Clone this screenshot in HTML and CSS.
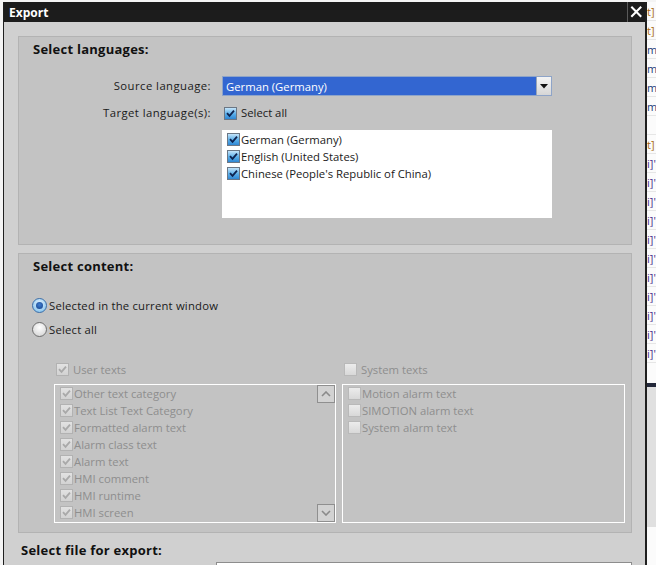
FILE: index.html
```html
<!DOCTYPE html>
<html>
<head>
<meta charset="utf-8">
<link rel="stylesheet" href="styles.css">
</head>
<body>
<div class="page">
  <div class="dialog">
    <div class="titlebar">
      <span class="title">Export</span>
      <span class="close"><svg width="18" height="20" viewBox="0 0 18 20"><path d="M3.5 4.5 L14 15 M14 4.5 L3.5 15" stroke="#fff" stroke-width="2.2" fill="none"/></svg></span>
    </div>
    <div class="content">
      <section class="group g1">
        <h2 class="gtitle">Select languages:</h2>
        <div class="form">
          <label class="lbl">Source language:</label>
          <div class="dropdown">
            <span class="dd-text">German (Germany)</span>
            <span class="dd-btn"><svg width="8" height="5" viewBox="0 0 8 5"><path d="M0 0 H8 L4 4.5 Z" fill="#111"/></svg></span>
          </div>
          <label class="lbl lbl2">Target language(s):</label>
          <div class="chkrow">
            <span class="cb on"><svg width="11" height="11" viewBox="0 0 11 11"><path d="M2 5.2 L4.5 7.8 L9 2.6" stroke="#0d2350" stroke-width="1.8" fill="none"/></svg></span>
            <span>Select all</span>
          </div>
          <span></span>
          <div class="langlist">
            <div class="item"><span class="cb on"><svg width="11" height="11" viewBox="0 0 11 11"><path d="M2 5.2 L4.5 7.8 L9 2.6" stroke="#0d2350" stroke-width="1.8" fill="none"/></svg></span><span>German (Germany)</span></div>
            <div class="item"><span class="cb on"><svg width="11" height="11" viewBox="0 0 11 11"><path d="M2 5.2 L4.5 7.8 L9 2.6" stroke="#0d2350" stroke-width="1.8" fill="none"/></svg></span><span>English (United States)</span></div>
            <div class="item"><span class="cb on"><svg width="11" height="11" viewBox="0 0 11 11"><path d="M2 5.2 L4.5 7.8 L9 2.6" stroke="#0d2350" stroke-width="1.8" fill="none"/></svg></span><span>Chinese (People's Republic of China)</span></div>
          </div>
        </div>
      </section>
      <section class="group g2">
        <h2 class="gtitle">Select content:</h2>
        <div class="radios">
          <div class="radio-row"><span class="radio sel"><span class="dot"></span></span><span>Selected in the current window</span></div>
          <div class="radio-row"><span class="radio"></span><span>Select all</span></div>
        </div>
        <div class="cols">
          <div class="col">
            <div class="colhead dis"><span class="cb dchk"><svg width="11" height="11" viewBox="0 0 11 11"><path d="M2 5.2 L4.5 7.8 L9 2.6" stroke="#a9a9a9" stroke-width="1.8" fill="none"/></svg></span><span>User texts</span></div>
            <div class="tlist">
              <div class="item dis"><span class="cb dchk"><svg width="11" height="11" viewBox="0 0 11 11"><path d="M2 5.2 L4.5 7.8 L9 2.6" stroke="#a9a9a9" stroke-width="1.8" fill="none"/></svg></span><span>Other text category</span></div>
              <div class="item dis"><span class="cb dchk"><svg width="11" height="11" viewBox="0 0 11 11"><path d="M2 5.2 L4.5 7.8 L9 2.6" stroke="#a9a9a9" stroke-width="1.8" fill="none"/></svg></span><span>Text List Text Category</span></div>
              <div class="item dis"><span class="cb dchk"><svg width="11" height="11" viewBox="0 0 11 11"><path d="M2 5.2 L4.5 7.8 L9 2.6" stroke="#a9a9a9" stroke-width="1.8" fill="none"/></svg></span><span>Formatted alarm text</span></div>
              <div class="item dis"><span class="cb dchk"><svg width="11" height="11" viewBox="0 0 11 11"><path d="M2 5.2 L4.5 7.8 L9 2.6" stroke="#a9a9a9" stroke-width="1.8" fill="none"/></svg></span><span>Alarm class text</span></div>
              <div class="item dis"><span class="cb dchk"><svg width="11" height="11" viewBox="0 0 11 11"><path d="M2 5.2 L4.5 7.8 L9 2.6" stroke="#a9a9a9" stroke-width="1.8" fill="none"/></svg></span><span>Alarm text</span></div>
              <div class="item dis"><span class="cb dchk"><svg width="11" height="11" viewBox="0 0 11 11"><path d="M2 5.2 L4.5 7.8 L9 2.6" stroke="#a9a9a9" stroke-width="1.8" fill="none"/></svg></span><span>HMI comment</span></div>
              <div class="item dis"><span class="cb dchk"><svg width="11" height="11" viewBox="0 0 11 11"><path d="M2 5.2 L4.5 7.8 L9 2.6" stroke="#a9a9a9" stroke-width="1.8" fill="none"/></svg></span><span>HMI runtime</span></div>
              <div class="item dis"><span class="cb dchk"><svg width="11" height="11" viewBox="0 0 11 11"><path d="M2 5.2 L4.5 7.8 L9 2.6" stroke="#a9a9a9" stroke-width="1.8" fill="none"/></svg></span><span>HMI screen</span></div>
              <div class="item dis"><span class="cb dchk"></span></div>
              <span class="sbtn up"><svg width="10" height="6" viewBox="0 0 10 6"><path d="M1 5 L5 1 L9 5" stroke="#8a8a8a" stroke-width="1.6" fill="none"/></svg></span>
              <span class="sbtn down"><svg width="10" height="6" viewBox="0 0 10 6"><path d="M1 1 L5 5 L9 1" stroke="#8a8a8a" stroke-width="1.6" fill="none"/></svg></span>
            </div>
          </div>
          <div class="col">
            <div class="colhead dis"><span class="cb dun"></span><span>System texts</span></div>
            <div class="tlist">
              <div class="item dis"><span class="cb dun"></span><span>Motion alarm text</span></div>
              <div class="item dis"><span class="cb dun"></span><span>SIMOTION alarm text</span></div>
              <div class="item dis"><span class="cb dun"></span><span>System alarm text</span></div>
            </div>
          </div>
        </div>
      </section>
      <h2 class="ftitle">Select file for export:</h2>
      <div class="filebox"></div>
    </div>
  </div>
  <div class="side">
    <div class="sl o">t]</div>
    <div class="sl o">t]</div>
    <div class="sl b">m</div>
    <div class="sl b">m</div>
    <div class="sl b">m</div>
    <div class="sl b">m</div>
    <div class="sl"></div>
    <div class="sl o">t]</div>
    <div class="sl p">i]'</div>
    <div class="sl p">i]'</div>
    <div class="sl p">i]'</div>
    <div class="sl p">i]'</div>
    <div class="sl p">i]'</div>
    <div class="sl p">i]'</div>
    <div class="sl p">i]'</div>
    <div class="sl p">i]'</div>
    <div class="sl p">i]'</div>
    <div class="sl p">i]'</div>
    <div class="sl p">i]'</div>
    <div class="sdark"></div>
    <div class="sgray"></div>
  </div>
</div>
</body>
</html>
```

FILE: styles.css
```css
* { box-sizing: border-box; }
html, body { margin: 0; padding: 0; }
body {
  background: #f4f4f4;
  font-family: "Open Sans", "Noto Sans", sans-serif;
  font-size: 11.3px;
  color: #1a1a1a;
  width: 656px;
  height: 565px;
  overflow: hidden;
}
.page {
  display: flex;
  padding: 2px 0 0 3px;
  height: 565px;
}
.dialog {
  width: 644px;
  height: 563px;
  border-left: 1px solid #1f1f1f;
  border-right: 2px solid #1f1f1f;
  background: #d0d0d0;
  display: flex;
  flex-direction: column;
  overflow: hidden;
  flex-shrink: 0;
}
.titlebar {
  height: 20px;
  background: #1c1c1c;
  display: flex;
  align-items: center;
  justify-content: space-between;
  flex-shrink: 0;
}
.title {
  color: #fff;
  font-weight: 700;
  font-size: 12px;
  padding-left: 5px;
}
.close {
  width: 18px;
  height: 20px;
  border-left: 1px solid #5a5a5a;
  display: flex;
  align-items: center;
  justify-content: center;
}
.content {
  padding: 14px 13px 0 14px;
  display: flex;
  flex-direction: column;
}
.group {
  background: #c3c3c3;
  border: 1px solid #b3b3b3;
  padding: 4px 0 0 14px;
}
.g1 { height: 209px; }
.g2 { height: 280px; margin-top: 8px; }
.gtitle {
  margin: 0;
  font-size: 13px;
  font-weight: 700;
  line-height: 16px;
  color: #111;
  letter-spacing: 0.25px;
}
.form {
  display: grid;
  grid-template-columns: 178px 330px;
  column-gap: 11px;
  margin-top: 19px;
  align-items: center;
}
.lbl {
  text-align: right;
  line-height: 20px;
  letter-spacing: 0.45px;
}
.lbl2 { margin-top: 9px; line-height: 16px; }
.dropdown {
  height: 20px;
  background: #3366d1;
  border: 1px solid #8ea4c8;
  display: flex;
  align-items: center;
  justify-content: space-between;
}
.dd-text {
  color: #fff;
  padding-left: 3px;
}
.dd-btn {
  width: 15px;
  height: 18px;
  background: linear-gradient(#f4f4f4, #d6d6d6);
  border-left: 1px solid #9aa5b5;
  display: flex;
  align-items: center;
  justify-content: center;
}
.chkrow {
  margin-top: 9px;
  display: flex;
  align-items: center;
  gap: 4px;
  line-height: 16px;
  padding-left: 2px;
}
.langlist {
  margin-top: 9px;
  height: 88px;
  background: #fff;
  padding: 1px 0 0 5px;
}
.item {
  display: flex;
  align-items: center;
  gap: 1px;
  height: 17px;
  white-space: nowrap;
}
.cb {
  width: 13px;
  height: 13px;
  border: 1px solid #6b7785;
  display: inline-flex;
  align-items: center;
  justify-content: center;
  flex-shrink: 0;
}
.cb.on {
  background: linear-gradient(#c4e4fa, #59aee8 55%, #2f87d4);
}
.cb.dchk {
  border-color: #b2b2b2;
  background: linear-gradient(#e2e2e2, #d2d2d2);
}
.cb.dun {
  border-color: #b9b9b9;
  background: linear-gradient(#ececec, #d8d8d8);
}
.dis { color: #8e8e8e; }
.radios {
  margin-top: 23px;
  display: flex;
  flex-direction: column;
  gap: 7px;
  margin-left: -1px;
  letter-spacing: 0.2px;
}
.radio-row {
  display: flex;
  align-items: center;
  gap: 2px;
  line-height: 17px;
}
.radio {
  width: 15px;
  height: 15px;
  border-radius: 50%;
  border: 1px solid #6e6e6e;
  background: radial-gradient(circle at 50% 35%, #ffffff, #d8d8d8 80%);
  display: inline-flex;
  align-items: center;
  justify-content: center;
}
.radio.sel {
  border-color: #3a6da8;
  background: radial-gradient(circle at 50% 35%, #e4f3fd, #86c4ee 85%);
}
.dot {
  width: 7px;
  height: 7px;
  border-radius: 50%;
  background: radial-gradient(circle at 50% 40%, #3f7ed1, #123f86);
}
.cols {
  margin-top: 23px;
  margin-left: 21px;
  display: grid;
  grid-template-columns: 282px 283px;
  column-gap: 6px;
}
.colhead {
  display: flex;
  align-items: center;
  gap: 4px;
  height: 16px;
  padding-left: 2px;
}
.tlist {
  position: relative;
  margin-top: 7px;
  height: 139px;
  border: 1px solid #ffffff;
  padding: 0 0 0 5px;
  overflow: hidden;
}
.sbtn {
  position: absolute;
  right: 0;
  width: 18px;
  height: 18px;
  border: 1px solid #8f8f8f;
  background: #d2d2d2;
  display: flex;
  align-items: center;
  justify-content: center;
}
.sbtn.up { top: 0; }
.sbtn.down { bottom: 0; }
.ftitle {
  margin: 9px 0 0 3px;
  font-size: 13px;
  font-weight: 700;
  line-height: 16px;
  color: #111;
  letter-spacing: 0.25px;
}
.filebox {
  margin: 4px 0 0 198px;
  height: 10px;
  border: 1px solid #8d8d8d;
  background: #fff;
}
.side {
  width: 9px;
  overflow: hidden;
  background: #fbfbfb;
  font-size: 11px;
  flex-shrink: 0;
}
.sl {
  height: 19px;
  line-height: 19px;
  white-space: nowrap;
  border-bottom: 1px solid #e6e6e6;
}
.sl.o { color: #a86a10; }
.sl.b { color: #1b3d7a; }
.sl.p { color: #4a2a8a; }
.sdark { height: 4px; background: #23283a; margin-top: 20px; }
.sgray { height: 140px; background: #e0e0e0; }
```
